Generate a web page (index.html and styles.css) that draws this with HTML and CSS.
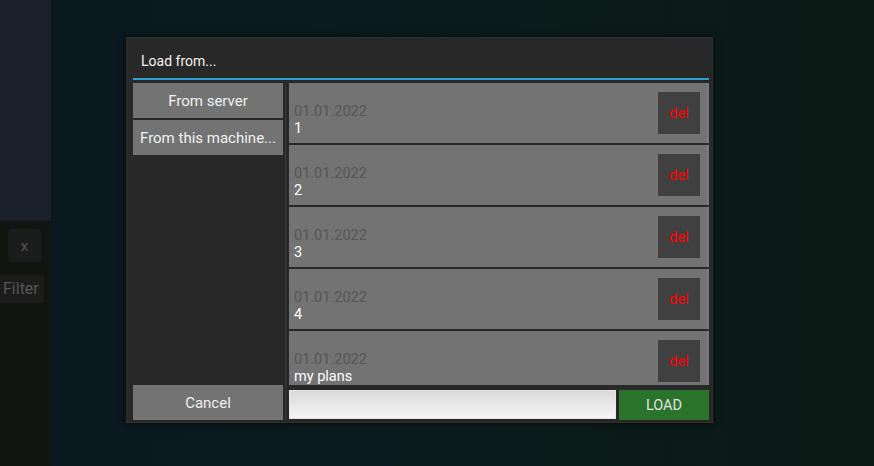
FILE: index.html
```html
<!DOCTYPE html>
<html>
<head>
<meta charset="utf-8">
<link rel="stylesheet" href="styles.css">
</head>
<body>
<div class="app">
  <aside class="sidebar">
    <div class="sidebar-top"></div>
    <div class="sidebar-bottom">
      <div class="close-btn">x</div>
      <div class="filter-btn">Filter</div>
    </div>
  </aside>
  <main class="stage"></main>
</div>

<div class="dialog">
  <div class="dialog-title">Load from...</div>
  <div class="dialog-rule"></div>
  <div class="dialog-body">
    <div class="sources">
      <div class="btn src-btn">From server</div>
      <div class="btn src-btn">From this machine...</div>
      <div class="spacer"></div>
      <div class="btn src-btn">Cancel</div>
    </div>
    <div class="splitter"><div class="splitter-line"></div></div>
    <div class="files">
      <div class="list">
        <div class="row"><div class="meta"><div class="date">01.01.2022</div><div class="name">1</div></div><div class="del">del</div></div>
        <div class="row"><div class="meta"><div class="date">01.01.2022</div><div class="name">2</div></div><div class="del">del</div></div>
        <div class="row"><div class="meta"><div class="date">01.01.2022</div><div class="name">3</div></div><div class="del">del</div></div>
        <div class="row"><div class="meta"><div class="date">01.01.2022</div><div class="name">4</div></div><div class="del">del</div></div>
        <div class="row"><div class="meta"><div class="date">01.01.2022</div><div class="name">my plans</div></div><div class="del">del</div></div>
        <div class="scrollbar"></div>
      </div>
      <div class="actions">
        <input class="name-input" type="text">
        <div class="load-btn">LOAD</div>
      </div>
    </div>
  </div>
</div>
</body>
</html>
```

FILE: styles.css
```css
* { box-sizing: border-box; }

html, body {
  margin: 0;
  padding: 0;
}

body {
  width: 874px;
  height: 466px;
  overflow: hidden;
  font-family: Roboto, "Liberation Sans", sans-serif;
  font-size: 14px;
  background: #0b1a1c;
}

.app {
  display: flex;
  width: 874px;
  height: 466px;
}

.sidebar {
  width: 51px;
  display: flex;
  flex-direction: column;
}

.sidebar-top {
  height: 221px;
  background: #18212c;
}

.sidebar-bottom {
  flex: 1;
  background: #12140f;
  padding-top: 8px;
  position: relative;
}

.close-btn {
  margin-left: 8px;
  width: 33px;
  height: 33px;
  background: #1c1c1c;
  border-radius: 3px;
  color: #555;
  font-size: 15px;
  display: flex;
  align-items: center;
  justify-content: center;
}

.filter-btn {
  margin-top: 13px;
  margin-left: -10px;
  width: 54px;
  height: 28px;
  background: #1c1c1c;
  border-radius: 3px;
  color: #565656;
  font-size: 16px;
  line-height: 28px;
  padding-left: 13px;
}

.stage {
  flex: 1;
  background: linear-gradient(to right, #0a1920, #0b1b1c 50%, #0c1a15);
}

.dialog {
  position: absolute;
  left: 126px;
  top: 37px;
  width: 587px;
  height: 386px;
  background: #282828;
  border: 1px solid #2f2f2f;
  box-shadow: 0 0 6px 1px rgba(0, 0, 0, 0.55);
  padding: 0 3px 2px 6px;
  display: flex;
  flex-direction: column;
}

.dialog-title {
  height: 40px;
  color: #f2f2f2;
  padding-left: 8px;
  line-height: 40px;
  padding-top: 3px;
}

.dialog-rule {
  height: 2px;
  background: #2d9fd3;
  margin-bottom: 3px;
}

.dialog-body {
  flex: 1;
  display: flex;
  min-height: 0;
}

.sources {
  width: 150px;
  display: flex;
  flex-direction: column;
  gap: 2px;
}

.spacer { flex: 1; }

.btn {
  height: 35px;
  background: #737373;
  color: #f0f0f0;
  font-size: 15px;
  display: flex;
  align-items: center;
  justify-content: center;
  white-space: nowrap;
}

.splitter {
  width: 6px;
  display: flex;
  justify-content: center;
}

.splitter-line {
  width: 1px;
  margin-left: -1px;
  background: #3b3b3b;
}

.files {
  width: 420px;
  display: flex;
  flex-direction: column;
}

.list {
  height: 302px;
  overflow: hidden;
  position: relative;
  display: flex;
  flex-direction: column;
  gap: 2px;
}

.row {
  flex: none;
  height: 60px;
  background: #737373;
  display: flex;
  align-items: center;
  justify-content: space-between;
  padding: 0 9px 0 5px;
}

.meta {
  align-self: flex-end;
  padding-bottom: 6px;
  line-height: 17px;
  font-size: 14.5px;
}

.date { color: #555555; }
.name { color: #ffffff; }

.del {
  width: 42px;
  height: 42px;
  background: #404040;
  color: #ff0000;
  font-size: 14.5px;
  display: flex;
  align-items: center;
  justify-content: center;
}

.scrollbar {
  position: absolute;
  right: 0;
  top: 0;
  bottom: 0;
  width: 2px;
  background: rgba(255, 255, 255, 0.05);
}

.actions {
  flex: 1;
  display: flex;
  align-items: flex-end;
  gap: 3px;
  padding-top: 5px;
}

.name-input {
  width: 327px;
  height: 29px;
  margin: 0 0 1px 0;
  border: 1px solid #e6e6e6;
  border-radius: 0;
  background: linear-gradient(to bottom, #dadada, #f5f5f5);
  outline: none;
  padding: 0 4px;
  font-family: Roboto, sans-serif;
  font-size: 14px;
}

.load-btn {
  width: 90px;
  height: 30px;
  background: #29732a;
  color: #e2e2e2;
  font-size: 14.5px;
  display: flex;
  align-items: center;
  justify-content: center;
}
```
